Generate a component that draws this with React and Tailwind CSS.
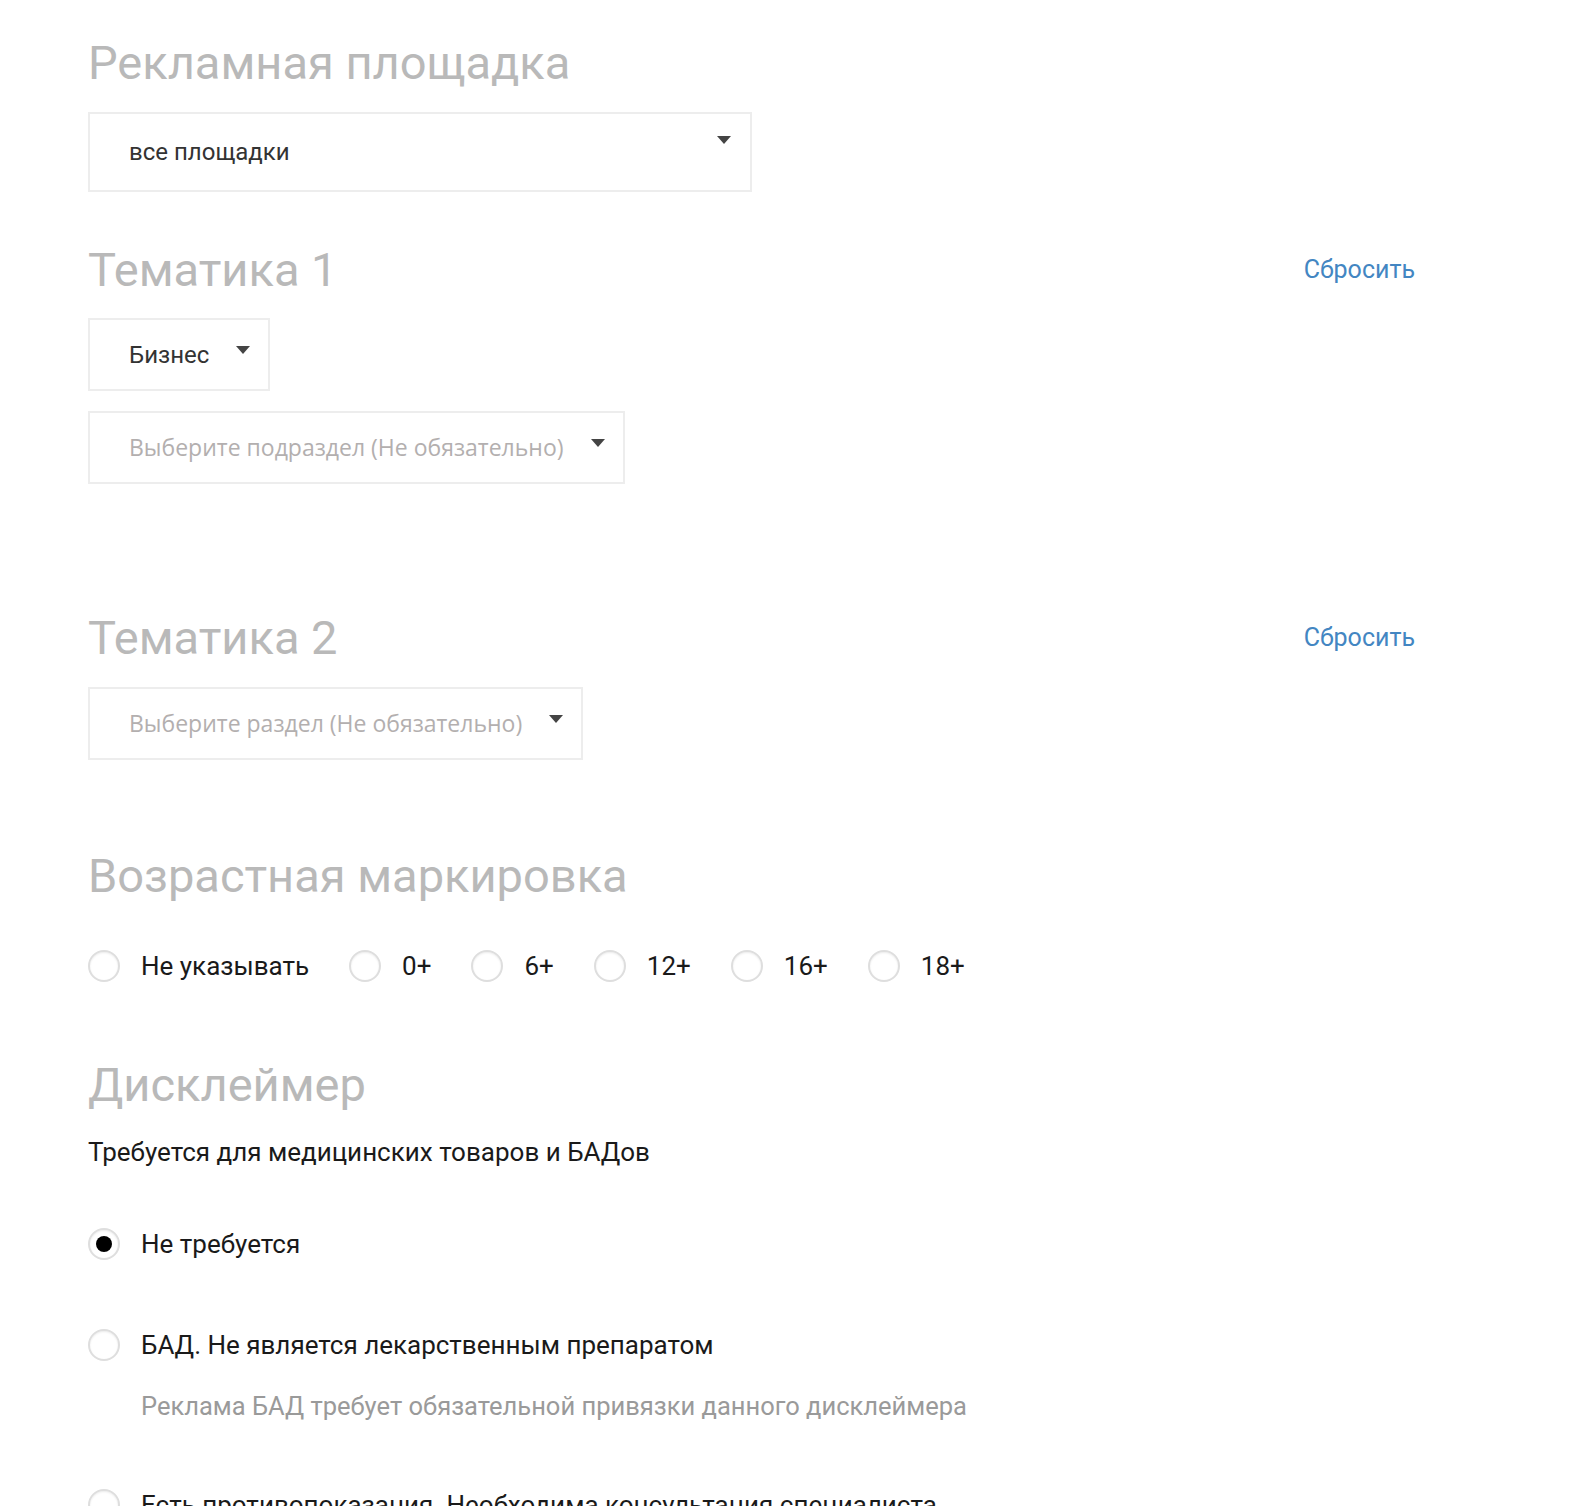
import React from "react";

const Caret = ({ className = "" }) => (
  <svg width="14" height="8" viewBox="0 0 14 8" className={className}>
    <path d="M0 0 H14 L7 8 Z" fill="#444" />
  </svg>
);

const Heading = ({ children, reset, className = "" }) => (
  <div className={`flex items-center justify-between h-[60px] ${className}`}>
    <h2 className="text-[47px] leading-[60px] font-normal text-[#b9b9b9]">{children}</h2>
    {reset && <button className="text-[25px] text-[#4386c2]">Сбросить</button>}
  </div>
);

const Select = ({ value, placeholder, className = "" }) => (
  <div
    className={`inline-flex items-center h-[73px] border-2 border-[#ededed] bg-white pl-[39px] pr-[18px] gap-[27px] ${className}`}
  >
    {value ? (
      <span className="text-[24px] text-[#333]">{value}</span>
    ) : (
      <span className="text-[23px] text-[#b3afaf]" style={{ fontFamily: '"Open Sans", sans-serif' }}>
        {placeholder}
      </span>
    )}
    <Caret className="mb-[10px]" />
  </div>
);

const Radio = ({ checked }) => (
  <span className="w-8 h-8 shrink-0 rounded-full border-2 border-[#dedede] bg-white shadow-[inset_0_1px_2px_rgba(0,0,0,0.08)] flex items-center justify-center">
    {checked && <span className="w-4 h-4 rounded-full bg-black" />}
  </span>
);

const RadioOption = ({ label, checked, className = "" }) => (
  <label className={`flex items-center h-8 gap-[21px] ${className}`}>
    <Radio checked={checked} />
    <span className="text-[26px] text-[#1a1a1a]">{label}</span>
  </label>
);

const ages = ["Не указывать", "0+", "6+", "12+", "16+", "18+"];

export default function App() {
  return (
    <div
      className="w-full min-h-screen bg-white overflow-hidden"
      style={{ fontFamily: 'Roboto, "Noto Sans", sans-serif' }}
    >
      <div className="pl-[88px] w-[1415px] pt-[33px]">
        <Heading>Рекламная площадка</Heading>

        <div className="mt-[19px] w-[664px] h-[80px] border-2 border-[#ededed] flex items-center justify-between pl-[39px] pr-[19px]">
          <span className="text-[24px] text-[#333]">все площадки</span>
          <Caret className="mb-[24px]" />
        </div>

        <Heading reset className="mt-[48px]">Тематика 1</Heading>
        <div className="mt-[18px]">
          <Select value="Бизнес" />
        </div>
        <div className="mt-[20px]">
          <Select placeholder="Выберите подраздел (Не обязательно)" />
        </div>

        <Heading reset className="mt-[124px]">Тематика 2</Heading>
        <div className="mt-[19px]">
          <Select placeholder="Выберите раздел (Не обязательно)" />
        </div>

        <Heading className="mt-[86px]">Возрастная маркировка</Heading>
        <div className="mt-[44px] flex items-center gap-[40px]">
          {ages.map((a) => (
            <RadioOption key={a} label={a} />
          ))}
        </div>

        <Heading className="mt-[73px]">Дисклеймер</Heading>
        <p className="mt-[21px] text-[26px] leading-[32px] text-[#1a1a1a]">
          Требуется для медицинских товаров и БАДов
        </p>

        <RadioOption checked label="Не требуется" className="mt-[60px]" />
        <RadioOption label="БАД. Не является лекарственным препаратом" className="mt-[69px]" />
        <p className="mt-[29px] pl-[53px] text-[25.5px] leading-[32px] text-[#9a9a9a]">
          Реклама БАД требует обязательной привязки данного дисклеймера
        </p>
        <RadioOption
          label="Есть противопоказания. Необходима консультация специалиста"
          className="mt-[67px]"
        />
        <div className="h-[80px]" />
      </div>
    </div>
  );
}
